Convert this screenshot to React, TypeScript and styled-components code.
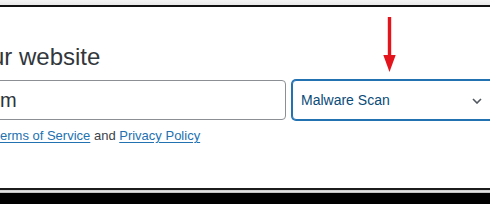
import React from 'react'
import styled, { createGlobalStyle } from 'styled-components'

const GlobalStyle = createGlobalStyle`
  html, body {
    margin: 0;
    padding: 0;
    background: #000;
  }
  body {
    font-family: "Liberation Sans", Arial, Helvetica, sans-serif;
  }
`

const Frame = styled.div`
  width: 490px;
  height: 204px;
  overflow: hidden;
  background: #000;
  display: flex;
  flex-direction: column;
`

const TopBand = styled.div`
  height: 5px;
  background: linear-gradient(#f4f4f4, #e9e9e9);
  flex: none;
`

const Card = styled.div`
  position: relative;
  height: 185px;
  box-sizing: border-box;
  flex: none;
  background: #fff;
  border-top: 2px solid #111;
  border-bottom: 2px solid #1c1c1c;
  overflow: hidden;
  padding-top: 35px;
`

const Ledge = styled.div`
  height: 3px;
  flex: none;
  background: linear-gradient(#c9c9c9, #e2e2e2 50%, #b5b5b5);
`

const Title = styled.h2`
  margin: 0 0 0 -9px;
  font-size: 24px;
  line-height: 30px;
  font-weight: 400;
  color: #32373c;
  white-space: nowrap;
`

const Row = styled.div`
  display: flex;
  gap: 6px;
  margin: 8px 0 0 -12px;
`

const UrlInput = styled.input`
  width: 298px;
  height: 40px;
  box-sizing: border-box;
  flex: none;
  border: 1px solid #8c8f94;
  border-radius: 4px;
  padding: 0 11px;
  font-family: inherit;
  font-size: 20px;
  color: #2c3338;
  background: #fff;
  outline: none;
`

const Select = styled.div`
  width: 210px;
  height: 40px;
  box-sizing: border-box;
  flex: none;
  display: flex;
  align-items: center;
  justify-content: space-between;
  padding: 0 19px 0 8px;
  border: 1px solid #2271b1;
  box-shadow: 0 0 0 1px #2271b1;
  border-radius: 4px;
  font-size: 14px;
  color: #0a4b78;
  background: #fff;
`

const Chevron = styled.svg`
  width: 10px;
  height: 6px;
  flex: none;
  margin-top: 2px;
`

const Terms = styled.p`
  margin: 6px 0 0;
  font-size: 13px;
  line-height: 19.5px;
  color: #3c434a;
  white-space: nowrap;
`

const Link = styled.a`
  color: #2271b1;
  text-decoration: underline;
  text-underline-offset: 2px;
`

const Arrow = styled.svg`
  position: absolute;
  left: 382px;
  top: 10px;
  width: 15px;
  height: 56px;
`

export default function App() {
  return (
    <>
      <GlobalStyle />
      <Frame>
        <TopBand />
        <Card>
          <Title>ur website</Title>
          <Row>
            <UrlInput defaultValue="m" readOnly />
            <Select>
              <span>Malware Scan</span>
              <Chevron viewBox="0 0 10 6">
                <path d="M1 1l4 4 4-4" fill="none" stroke="#50575e" strokeWidth="1.6" />
              </Chevron>
            </Select>
          </Row>
          <Terms>
            <Link href="#">erms of Service</Link> and <Link href="#">Privacy Policy</Link>
          </Terms>
          <Arrow viewBox="0 0 15 56">
            <rect x="5.8" y="0" width="3.4" height="42" fill="#e3141b" />
            <polygon points="1.3,38 13.7,38 7.5,55" fill="#e3141b" />
          </Arrow>
        </Card>
        <Ledge />
      </Frame>
    </>
  )
}
